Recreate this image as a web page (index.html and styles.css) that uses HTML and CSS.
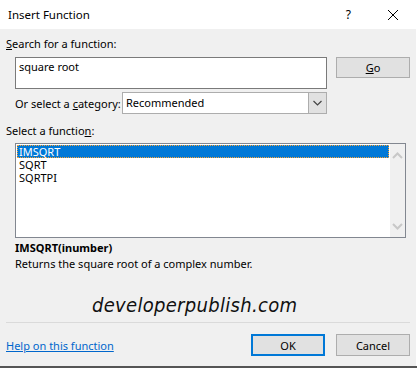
FILE: index.html
```html
<!DOCTYPE html>
<html lang="en">
<head>
    <meta charset="UTF-8">
    <title>Insert Function</title>
    <link rel="stylesheet" href="styles.css">
</head>
<body>
    <div class="dialog">
        <div class="titlebar">
            <span class="title">Insert Function</span>
            <span class="help">?</span>
            <svg class="close" width="12" height="12" viewBox="0 0 12 12">
                <path d="M1 1 L11 11 M11 1 L1 11" stroke="#000" stroke-width="1" fill="none"/>
            </svg>
        </div>
        <div class="content">
            <div class="label"><u>S</u>earch for a function:</div>
            <div class="search-row">
                <div class="search-box">square root</div>
                <button class="btn go"><u>G</u>o</button>
            </div>
            <div class="category-row">
                <span class="category-label">Or select a <u>c</u>ategory:</span>
                <div class="select">
                    <span class="select-value">Recommended</span>
                    <span class="select-arrow">
                        <svg width="9" height="6" viewBox="0 0 9 6"><path d="M0.5 1 L4.5 5 L8.5 1" stroke="#444" stroke-width="1.2" fill="none"/></svg>
                    </span>
                </div>
            </div>
            <div class="label list-label">Select a functio<u>n</u>:</div>
            <div class="listbox">
                <ul class="items">
                    <li class="selected">IMSQRT</li>
                    <li>SQRT</li>
                    <li>SQRTPI</li>
                </ul>
                <div class="scrollbar">
                    <svg width="11" height="7" viewBox="0 0 11 7"><path d="M1 6 L5.5 1.5 L10 6" stroke="#c8c8c8" stroke-width="2" fill="none"/></svg>
                    <svg width="11" height="7" viewBox="0 0 11 7"><path d="M1 1 L5.5 5.5 L10 1" stroke="#c8c8c8" stroke-width="2" fill="none"/></svg>
                </div>
            </div>
            <div class="signature">IMSQRT(inumber)</div>
            <div class="desc">Returns the square root of a complex number.</div>
            <div class="watermark">developerpublish.com</div>
            <div class="separator"></div>
            <div class="footer">
                <a class="help-link" href="#">Help on this function</a>
                <div class="buttons">
                    <button class="btn ok">OK</button>
                    <button class="btn">Cancel</button>
                </div>
            </div>
        </div>
        <div class="bottom-edge"></div>
    </div>
</body>
</html>
```

FILE: styles.css
```css
body {
    margin: 0;
    padding: 0;
    font-family: "Noto Sans", "Open Sans", sans-serif;
    font-size: 11px;
    color: #000;
    background: #fff;
}
.dialog {
    width: 417px;
    height: 368px;
    display: flex;
    flex-direction: column;
    overflow: hidden;
}
.titlebar {
    height: 29px;
    background: #fff;
    display: flex;
    align-items: center;
    padding-left: 8px;
    flex-shrink: 0;
}
.title {
    flex: 1;
    font-size: 11.5px;
}
.help {
    font-size: 12px;
    margin-right: 36px;
}
.close {
    margin-right: 18px;
}
.content {
    flex: 1;
    background: #f0f0f0;
    padding: 7px 6px 0 6px;
    margin-right: 1px;
    white-space: nowrap;
}
.label {
    height: 16px;
    line-height: 16px;
}
u {
    text-decoration: underline;
    text-underline-offset: 1px;
}
.search-row {
    display: flex;
    align-items: flex-start;
    margin-top: 5px;
    padding-left: 9px;
}
.search-box {
    background: #fff;
    border: 1px solid #7a7a7a;
    padding: 1px 3px;
    box-sizing: border-box;
    width: 312px;
    height: 32px;
    line-height: 16px;
}
.btn {
    font-family: inherit;
    font-size: 11px;
    color: #000;
    background: #e1e1e1;
    border: 1px solid #adadad;
    width: 74px;
    height: 21px;
    padding: 0;
    margin: 0;
}
.go {
    margin-left: 9px;
}
.category-row {
    display: flex;
    align-items: center;
    margin-top: 3px;
    padding-left: 9px;
}
.category-label {
    width: 107px;
}
.select {
    width: 205px;
    height: 22px;
    box-sizing: border-box;
    background: #fff;
    border: 1px solid #adadad;
    display: flex;
    align-items: stretch;
}
.select-value {
    flex: 1;
    padding-left: 3px;
    line-height: 20px;
}
.select-arrow {
    width: 17px;
    background: #e1e1e1;
    border-left: 1px solid #adadad;
    display: flex;
    align-items: center;
    justify-content: center;
}
.list-label {
    margin-top: 9px;
}
.listbox {
    margin: 4px 4px 0 9px;
    height: 95px;
    box-sizing: border-box;
    border: 1px solid #828790;
    background: #fff;
    display: flex;
}
.items {
    flex: 1;
    list-style: none;
    margin: 0;
    padding: 1px 1px 0 1px;
}
.items li {
    height: 13px;
    line-height: 13px;
    padding-left: 2px;
}
.items li.selected {
    background: #0078d7;
    color: #fff;
    outline: 1px dotted #f7a336;
    outline-offset: -1px;
}
.scrollbar {
    width: 15px;
    background: #f0f0f0;
    display: flex;
    flex-direction: column;
    justify-content: space-between;
    align-items: center;
    padding: 8px 0 7px 0;
}
.signature {
    font-weight: bold;
    margin: 2px 0 0 9px;
    height: 16px;
    line-height: 16px;
}
.desc {
    margin-left: 9px;
    height: 16px;
    line-height: 16px;
}
.watermark {
    font-family: "DejaVu Sans Condensed", "DejaVu Sans", sans-serif;
    font-style: italic;
    font-size: 20px;
    line-height: 30px;
    height: 30px;
    margin: 18px 0 0 86px;
    color: #111;
    letter-spacing: 0.3px;
}
.separator {
    height: 1px;
    background: #dadada;
    margin-top: 2px;
}
.footer {
    display: flex;
    align-items: center;
    justify-content: space-between;
    margin-top: 11px;
}
.help-link {
    color: #0066cc;
    text-decoration: underline;
}
.buttons {
    display: flex;
    gap: 11px;
}
.buttons .btn {
    width: 74px;
    height: 22px;
}
.btn.ok {
    border: 2px solid #0078d7;
}
.bottom-edge {
    height: 2px;
    background: #555;
    flex-shrink: 0;
}
```
